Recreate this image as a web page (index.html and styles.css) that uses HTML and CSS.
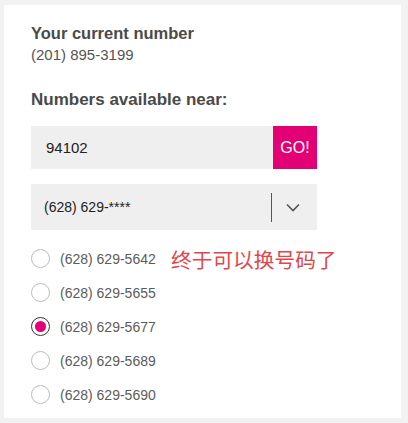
FILE: index.html
```html
<!DOCTYPE html>
<html>
<head>
<meta charset="utf-8">
<link rel="stylesheet" href="styles.css">
</head>
<body>
<div class="card">
  <div class="current">
    <div class="title">Your current number</div>
    <div class="number">(201) 895-3199</div>
  </div>
  <div class="title near">Numbers available near:</div>
  <div class="search">
    <div class="zip">94102</div>
    <div class="go">GO!</div>
  </div>
  <div class="select">
    <div class="sel-text">(628) 629-****</div>
    <div class="divider"></div>
    <svg class="chev" width="14" height="9" viewBox="0 0 14 9"><path d="M1 1.5 L7 7.5 L13 1.5" fill="none" stroke="#555" stroke-width="1.6"/></svg>
  </div>
  <div class="options">
    <div class="opt"><span class="radio"></span><span class="otext">(628) 629-5642</span><span class="note">终于可以换号码了</span></div>
    <div class="opt"><span class="radio"></span><span class="otext">(628) 629-5655</span></div>
    <div class="opt"><span class="radio on"></span><span class="otext">(628) 629-5677</span></div>
    <div class="opt"><span class="radio"></span><span class="otext">(628) 629-5689</span></div>
    <div class="opt"><span class="radio"></span><span class="otext">(628) 629-5690</span></div>
  </div>
</div>
</body>
</html>
```
FILE: styles.css
```css
html, body { margin: 0; padding: 0; }
body {
  background: #f2f2f2;
  width: 408px;
  height: 423px;
  overflow: hidden;
  font-family: "Liberation Sans", Arial, sans-serif;
}
.card {
  margin: 5px 0 0 4px;
  width: 397px;
  height: 413px;
  background: #fff;
  box-sizing: border-box;
  padding: 18px 0 0 27px;
}
.title {
  font-size: 16.5px;
  font-weight: bold;
  color: #4a4a4a;
  line-height: 20px;
}
.near { font-size: 17px; margin-top: 26px; }
.number {
  font-size: 15px;
  color: #555;
  line-height: 18px;
  margin-top: 3px;
}
.search {
  display: flex;
  margin-top: 16px;
  width: 286px;
  height: 43px;
}
.zip {
  flex: 1;
  background: #efefef;
  font-size: 15px;
  color: #222;
  padding-left: 15px;
  line-height: 43px;
}
.go {
  width: 44px;
  background: #e20074;
  color: #fff;
  font-size: 16px;
  line-height: 43px;
  text-align: center;
}
.select {
  display: flex;
  align-items: center;
  margin-top: 15px;
  width: 286px;
  height: 46px;
  background: #efefef;
}
.sel-text {
  flex: 1;
  font-size: 14px;
  color: #222;
  padding-left: 13px;
}
.divider {
  width: 1px;
  height: 29px;
  background: #555;
}
.chev { margin: 1px 17px 0 14px; }
.options {
  margin-top: 19px;
  display: flex;
  flex-direction: column;
  gap: 15px;
}
.opt {
  display: flex;
  align-items: center;
  height: 19px;
  position: relative;
}
.radio {
  width: 19px;
  height: 19px;
  box-sizing: border-box;
  border: 1px solid #bdbdbd;
  border-radius: 50%;
  display: flex;
  align-items: center;
  justify-content: center;
}
.radio.on { border: 1.5px solid #333; }
.radio.on::after {
  content: "";
  width: 11px;
  height: 11px;
  border-radius: 50%;
  background: #e20074;
}
.otext {
  margin-left: 10px;
  font-size: 14px;
  color: #5c5c5c;
}
.note {
  position: absolute;
  left: 140px;
  top: -5px;
  font-family: "Noto Sans CJK SC", sans-serif;
  font-size: 20.7px;
  color: #e0474c;
  white-space: nowrap;
}
```
